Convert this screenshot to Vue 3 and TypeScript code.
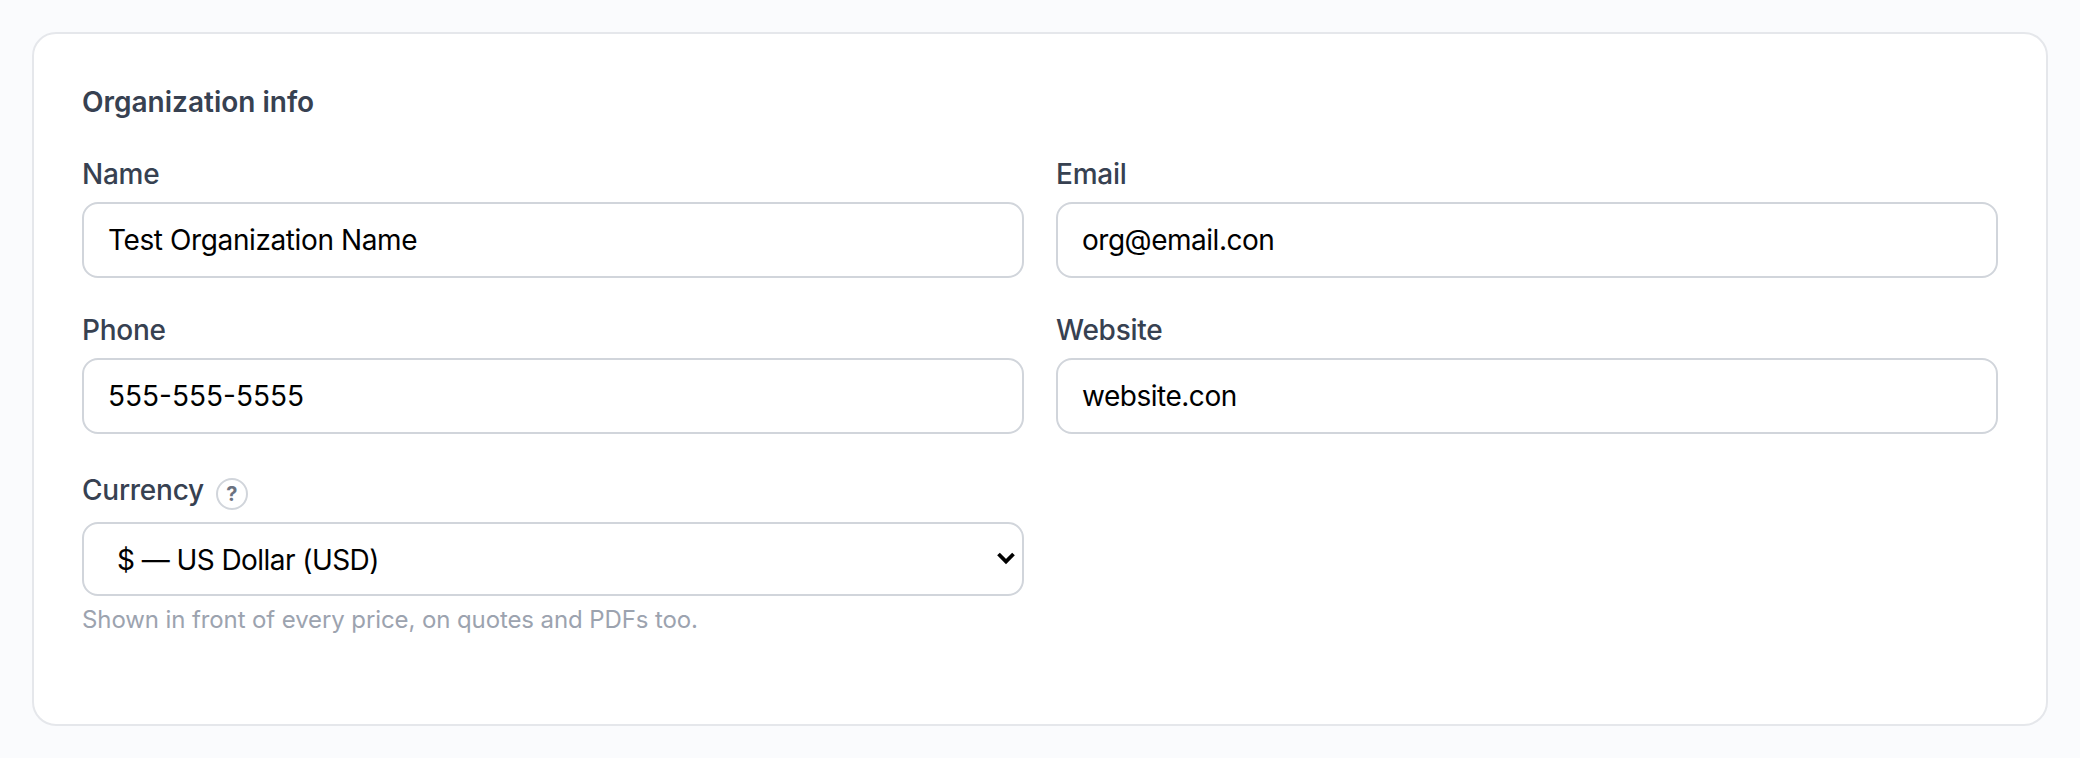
<script setup lang="ts">
import { ref } from "vue";

const name = ref("Test Organization Name");
const email = ref("org@email.con");
const phone = ref("555-555-5555");
const website = ref("website.con");
const currency = ref("USD");
</script>

<template>
  <main class="page">
    <section class="card">
      <h2 class="title">Organization info</h2>
      <div class="grid">
        <div class="field">
          <label class="label" for="org-name">Name</label>
          <input id="org-name" v-model="name" class="control control-name" type="text" />
        </div>
        <div class="field">
          <label class="label" for="org-email">Email</label>
          <input id="org-email" v-model="email" class="control" type="text" />
        </div>
        <div class="field">
          <label class="label" for="org-phone">Phone</label>
          <input id="org-phone" v-model="phone" class="control control-digits" type="text" />
        </div>
        <div class="field">
          <label class="label" for="org-website">Website</label>
          <input id="org-website" v-model="website" class="control" type="text" />
        </div>
        <div class="field">
          <div class="label-row">
            <label class="label" for="org-currency">Currency</label>
            <span class="help-badge">?</span>
          </div>
          <div class="select-wrap">
            <select id="org-currency" v-model="currency" class="control select">
              <option value="USD">$ — US Dollar (USD)</option>
            </select>
            <svg class="chevron" viewBox="0 0 18 13" aria-hidden="true">
              <path d="M1.5 2 L9 9.5 L16.5 2" fill="none" stroke="#000" stroke-width="3.8" />
            </svg>
          </div>
          <p class="hint">Shown in front of every price, on quotes and PDFs too.</p>
        </div>
      </div>
    </section>
  </main>
</template>

<style>
html,
body {
  margin: 0;
  background: #fafbfd;
}
</style>

<style scoped>
.page {
  box-sizing: border-box;
  height: 758px;
  padding: 32px;
  background: #fafbfd;
  font-family: Inter, "Liberation Sans", sans-serif;
}
.card {
  box-sizing: border-box;
  height: 694px;
  padding: 48px;
  background: #fff;
  border: 2px solid #e5e7eb;
  border-radius: 24px;
}
.title {
  margin: 0 0 32px;
  font-size: 28px;
  line-height: 40px;
  font-weight: 600;
  color: #374151;
}
.grid {
  display: grid;
  grid-template-columns: 1fr 1fr;
  gap: 32px;
}
.field {
  display: flex;
  flex-direction: column;
  min-width: 0;
}
.label {
  display: block;
  margin-bottom: 8px;
  font-size: 28px;
  line-height: 40px;
  font-weight: 500;
  letter-spacing: -0.25px;
  color: #374151;
}
.label-row {
  display: flex;
  align-items: flex-start;
  gap: 12px;
  height: 48px;
  margin-bottom: 8px;
}
.label-row .label {
  margin-bottom: 0;
  line-height: 48px;
}
.help-badge {
  box-sizing: border-box;
  display: flex;
  align-items: center;
  justify-content: center;
  width: 32px;
  height: 32px;
  margin-top: 12px;
  border: 2px solid #d1d5db;
  border-radius: 50%;
  font-size: 20px;
  font-weight: 700;
  color: #6b7280;
}
.control {
  box-sizing: border-box;
  display: block;
  width: 100%;
  height: 76px;
  margin: 0;
  padding: 0 24px;
  background: #fff;
  border: 2px solid #d1d5db;
  border-radius: 16px;
  outline: none;
  font-family: inherit;
  font-size: 28px;
  letter-spacing: -0.48px;
  color: #000;
}
.control-name {
  letter-spacing: -0.39px;
}
.control-digits {
  letter-spacing: 0;
}
.select-wrap {
  position: relative;
}
.select {
  height: 74px;
  padding-top: 2px;
  padding-left: 33px;
  letter-spacing: -0.56px;
  appearance: none;
  -webkit-appearance: none;
}
.chevron {
  position: absolute;
  top: 30px;
  right: 9px;
  width: 18px;
  height: 13px;
  pointer-events: none;
}
.hint {
  margin: 8px 0 0;
  font-size: 24px;
  line-height: 32px;
  letter-spacing: -0.1px;
  color: #9ca3af;
}
</style>
